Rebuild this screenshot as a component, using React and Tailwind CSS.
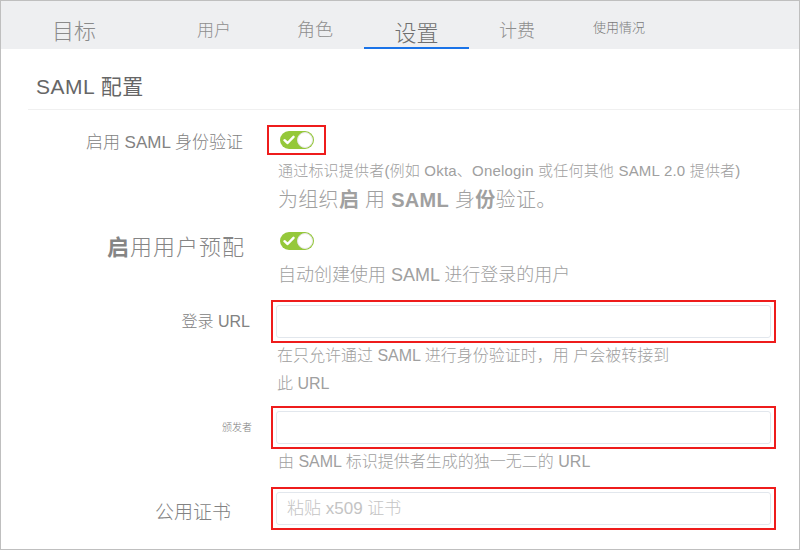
import React from "react";

const FONT = { fontFamily: '"Liberation Sans", "Noto Sans CJK SC", sans-serif' };

function Toggle() {
  return (
    <div className="relative w-[34px] h-[18px] rounded-full bg-[#95c83a]">
      <svg className="absolute left-[3px] top-[4px]" width="12" height="10" viewBox="0 0 12 10">
        <path d="M1.5 5.2 L4.6 8 L10.5 1.8" fill="none" stroke="#ffffff" strokeWidth="2.4" strokeLinecap="round" strokeLinejoin="round" />
      </svg>
      <div className="absolute right-[1px] top-[1px] w-[16px] h-[16px] rounded-full bg-white border border-[#e6e6e6]" />
    </div>
  );
}

function RedInput({ placeholder }) {
  return (
    <div className="ml-[4px] w-[505px] h-[43px] border-2 border-[#ee1c1c] p-[3px] box-border">
      <div className="w-full h-full border border-[#e2e7ed] rounded-[3px] bg-white flex items-center pl-[10px] box-border">
        {placeholder ? (
          <span className="text-[17px] leading-[20px] text-[#c4c4c4] font-light">{placeholder}</span>
        ) : null}
      </div>
    </div>
  );
}

export default function App() {
  return (
    <div className="w-[800px] h-[550px] box-border border border-[#bfbfbf] bg-white overflow-hidden" style={FONT}>
      {/* Tabs header */}
      <div className="h-[48px] bg-[#eeeff1] flex items-start font-light">
        <div className="ml-[51px] pt-[20px] text-[22px] leading-[22px] text-[#8a8a8a]">目标</div>
        <div className="ml-[101px] pt-[21px] text-[17px] leading-[17px] text-[#8e8e8e]">用户</div>
        <div className="ml-[66px] pt-[20px] text-[18px] leading-[18px] text-[#8e8e8e]">角色</div>
        <div className="ml-[31px] w-[105px] h-[48px] box-border border-b-2 border-[#1a73e8] pt-[22px] text-center text-[22px] leading-[22px] text-[#6f6f6f]">设置</div>
        <div className="ml-[30px] pt-[21px] text-[18px] leading-[18px] text-[#8e8e8e]">计费</div>
        <div className="ml-[58px] pt-[20px] text-[13px] leading-[13px] text-[#7a7a7a]">使用情况</div>
      </div>

      {/* Title */}
      <div className="ml-[27px] h-[61px] box-border border-b border-[#f0f0f0] pl-[8px] pt-[27px]">
        <div className="text-[21px] leading-[21px] tracking-[0.5px] text-[#666666]">SAML 配置</div>
      </div>

      {/* Form */}
      <div className="flex flex-col font-light">
        {/* Row 1 */}
        <div className="flex mt-[15px]">
          <div className="w-[266px] shrink-0 text-right pr-[24px] pt-[8px] text-[17px] leading-[20px] text-[#828282]">
            启用 SAML 身份验证
          </div>
          <div className="flex flex-col">
            <div className="w-[59px] h-[30px] box-border border-2 border-[#ee1c1c] pl-[11px] pt-[4px]">
              <Toggle />
            </div>
            <div className="ml-[11px] mt-[6px] text-[15px] leading-[20px] tracking-[0.2px] text-[#a0a0a0] whitespace-nowrap">
              通过标识提供者(例如 Okta、Onelogin 或任何其他 SAML 2.0 提供者)
            </div>
            <div className="ml-[11px] mt-[5px] text-[20px] leading-[28px] tracking-[0.3px] text-[#a0a0a0] whitespace-nowrap">
              为组织<b className="font-bold">启</b> 用 <b className="font-bold">SAML</b> 身<b className="font-bold">份</b>验证。
            </div>
          </div>
        </div>

        {/* Row 2 */}
        <div className="flex mt-[18px]">
          <div className="w-[266px] shrink-0 text-right pr-[22px] pt-[4px] text-[22px] leading-[24px] tracking-[1px] text-[#858585]">
            <b className="font-bold">启</b>用用户预配
          </div>
          <div className="flex flex-col">
            <div className="ml-[13px]">
              <Toggle />
            </div>
            <div className="ml-[11px] mt-[13px] text-[18px] leading-[24px] text-[#a0a0a0] whitespace-nowrap">
              自动创建使用 SAML 进行登录的用户
            </div>
          </div>
        </div>

        {/* Row 3 */}
        <div className="flex mt-[13px]">
          <div className="w-[266px] shrink-0 text-right pr-[17px] pt-[12px] text-[16px] leading-[20px] text-[#828282]">
            登录 URL
          </div>
          <div className="flex flex-col">
            <RedInput />
            <div className="ml-[10px] mt-[-1px] text-[16px] leading-[28px] text-[#a0a0a0] whitespace-nowrap">
              <div>在只允许通过 SAML 进行身份验证时，用 户会被转接到</div>
              <div>此 URL</div>
            </div>
          </div>
        </div>

        {/* Row 4 */}
        <div className="flex mt-[8px]">
          <div className="w-[266px] shrink-0 text-right pr-[15px] pt-[16px] text-[10px] leading-[12px] text-[#7c7c7c]">
            颁发者
          </div>
          <div className="flex flex-col">
            <RedInput />
            <div className="ml-[11px] mt-[1px] text-[16px] leading-[24px] text-[#a0a0a0] whitespace-nowrap">
              由 SAML 标识提供者生成的独一无二的 URL
            </div>
          </div>
        </div>

        {/* Row 5 */}
        <div className="flex mt-[13px]">
          <div className="w-[266px] shrink-0 text-right pr-[36px] pt-[14px] text-[19px] leading-[24px] text-[#828282]">
            公用证书
          </div>
          <div className="flex flex-col">
            <RedInput placeholder="粘贴 x509 证书" />
          </div>
        </div>
      </div>
    </div>
  );
}
